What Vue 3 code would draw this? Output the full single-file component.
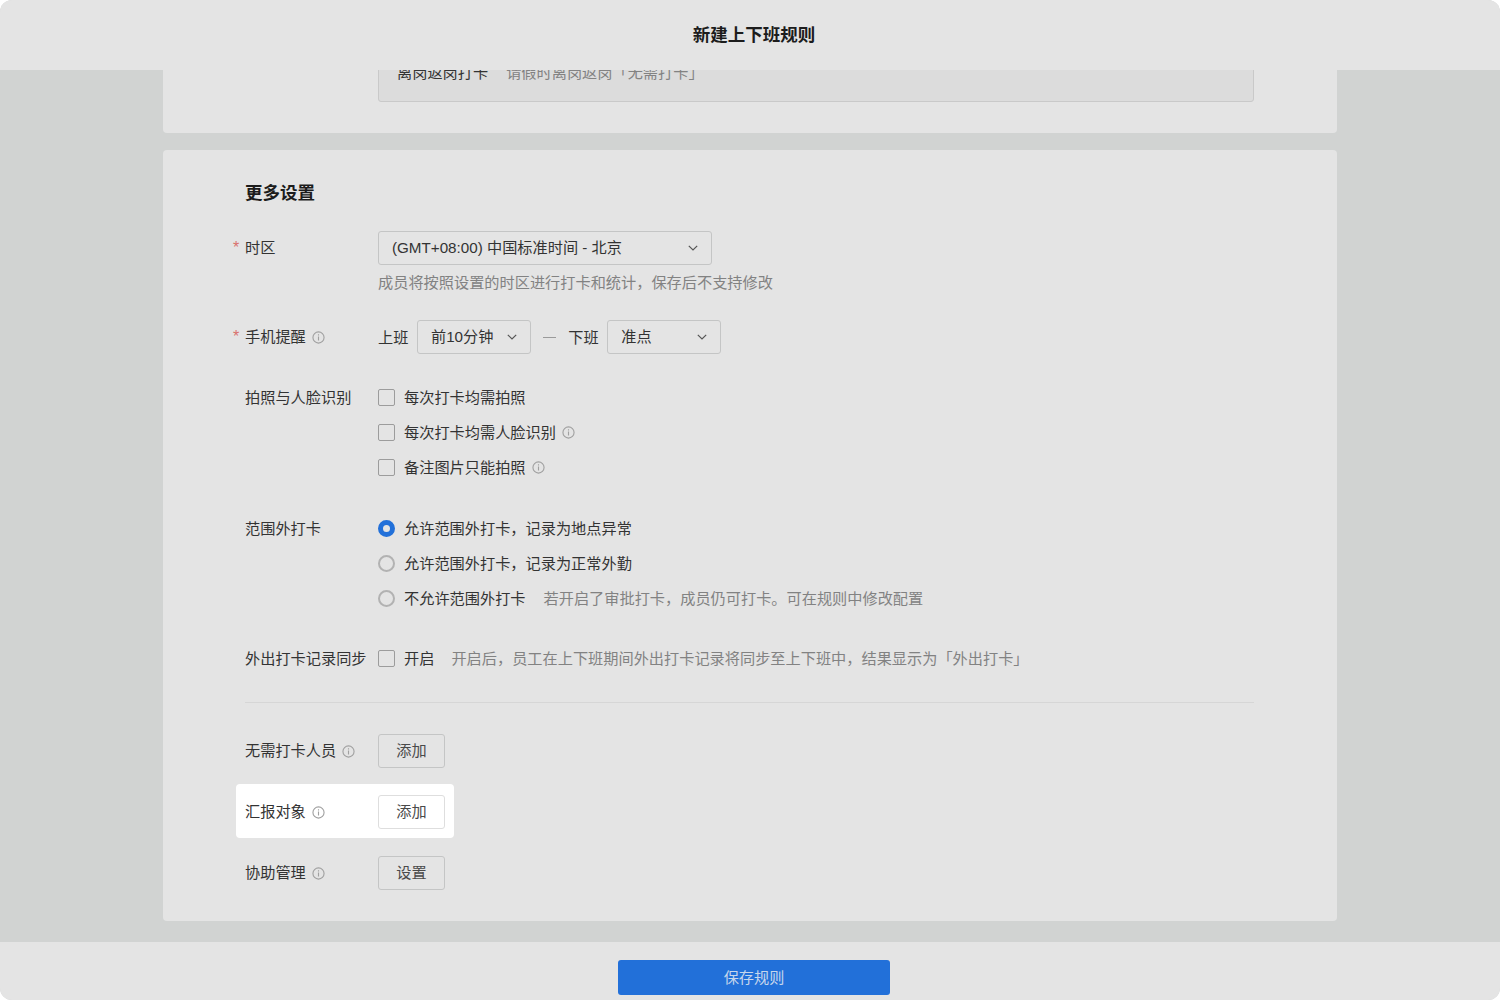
<script setup>
const photoOptions = [
  { text: '每次打卡均需拍照', info: false },
  { text: '每次打卡均需人脸识别', info: true },
  { text: '备注图片只能拍照', info: true }
];

const scopeOptions = [
  { text: '允许范围外打卡，记录为地点异常', checked: true },
  { text: '允许范围外打卡，记录为正常外勤', checked: false },
  { text: '不允许范围外打卡', checked: false, hint: '若开启了审批打卡，成员仍可打卡。可在规则中修改配置' }
];
</script>

<template>
  <div class="page">
    <header class="top-bar">新建上下班规则</header>

    <main class="content">
      <section class="card card-clipped">
        <div class="inner-box">
          <span class="box-label">离岗返岗打卡</span>
          <span class="hint">请假时离岗返岗「无需打卡」</span>
        </div>
      </section>

      <section class="card card-settings">
        <h2 class="section-title">更多设置</h2>

        <div class="row row-timezone">
          <label class="label required">时区</label>
          <div class="field">
            <div class="select select-wide">
              <span>(GMT+08:00) 中国标准时间 - 北京</span>
              <svg class="chevron" viewBox="0 0 10 6"><path d="M.8.8 5 5l4.2-4.2" /></svg>
            </div>
            <p class="line hint">成员将按照设置的时区进行打卡和统计，保存后不支持修改</p>
          </div>
        </div>

        <div class="row row-phone">
          <label class="label required">
            手机提醒
            <svg class="info" viewBox="0 0 14 14"><circle cx="7" cy="7" r="6" /><path d="M7 6v4.2M7 3.6v1.2" /></svg>
          </label>
          <div class="inline-field">
            <span class="inline-text">上班</span>
            <div class="select select-small">
              <span>前10分钟</span>
              <svg class="chevron" viewBox="0 0 10 6"><path d="M.8.8 5 5l4.2-4.2" /></svg>
            </div>
            <span class="dash"></span>
            <span class="inline-text">下班</span>
            <div class="select select-small">
              <span>准点</span>
              <svg class="chevron" viewBox="0 0 10 6"><path d="M.8.8 5 5l4.2-4.2" /></svg>
            </div>
          </div>
        </div>

        <div class="row row-photo">
          <label class="label line">拍照与人脸识别</label>
          <div class="field">
            <div v-for="opt in photoOptions" :key="opt.text" class="line option">
              <span class="checkbox"></span>
              <span>{{ opt.text }}</span>
              <svg v-if="opt.info" class="info" viewBox="0 0 14 14"><circle cx="7" cy="7" r="6" /><path d="M7 6v4.2M7 3.6v1.2" /></svg>
            </div>
          </div>
        </div>

        <div class="row row-scope">
          <label class="label line">范围外打卡</label>
          <div class="field">
            <div v-for="opt in scopeOptions" :key="opt.text" class="line option">
              <span class="radio" :class="{ checked: opt.checked }"></span>
              <span>{{ opt.text }}</span>
              <span v-if="opt.hint" class="hint side-hint">{{ opt.hint }}</span>
            </div>
          </div>
        </div>

        <div class="row row-outing">
          <label class="label line">外出打卡记录同步</label>
          <div class="field">
            <div class="line option">
              <span class="checkbox"></span>
              <span>开启</span>
              <span class="hint side-hint side-hint-tight">开启后，员工在上下班期间外出打卡记录将同步至上下班中，结果显示为「外出打卡」</span>
            </div>
          </div>
        </div>

        <hr class="divider" />

        <div class="row row-action">
          <label class="label">
            无需打卡人员
            <svg class="info" viewBox="0 0 14 14"><circle cx="7" cy="7" r="6" /><path d="M7 6v4.2M7 3.6v1.2" /></svg>
          </label>
          <button class="btn">添加</button>
        </div>

        <div class="row row-action row-highlight">
          <label class="label">
            汇报对象
            <svg class="info" viewBox="0 0 14 14"><circle cx="7" cy="7" r="6" /><path d="M7 6v4.2M7 3.6v1.2" /></svg>
          </label>
          <button class="btn btn-light">添加</button>
        </div>

        <div class="row row-action row-last">
          <label class="label">
            协助管理
            <svg class="info" viewBox="0 0 14 14"><circle cx="7" cy="7" r="6" /><path d="M7 6v4.2M7 3.6v1.2" /></svg>
          </label>
          <button class="btn">设置</button>
        </div>
      </section>
    </main>

    <footer class="bottom-bar">
      <button class="save-btn">保存规则</button>
    </footer>
  </div>
</template>

<style>
html,
body {
  margin: 0;
  background: #fff;
}
</style>

<style scoped>
.page {
  width: 1500px;
  height: 1000px;
  display: flex;
  flex-direction: column;
  overflow: hidden;
  border-radius: 12px;
  background: #d1d3d2;
  color: #333;
  font-family: "Liberation Sans", "Noto Sans CJK SC", sans-serif;
  font-size: 15.2px;
}

.top-bar {
  height: 70px;
  flex: none;
  padding: 0 0 3px 8px;
  box-sizing: border-box;
  display: flex;
  align-items: center;
  justify-content: center;
  background: #e4e4e4;
  color: #1c1c1c;
  font-size: 17.5px;
  font-weight: 700;
}

.content {
  flex: 1;
  display: flex;
  flex-direction: column;
  align-items: center;
  gap: 17px;
  overflow: hidden;
}

.card {
  width: 1174px;
  box-sizing: border-box;
  background: #e4e4e4;
  border-radius: 0 0 4px 4px;
}

.card-clipped {
  height: 63px;
  flex: none;
  display: flex;
  align-items: flex-end;
  padding: 0 83px 31px 215px;
}

.inner-box {
  flex: 1;
  height: 60px;
  box-sizing: border-box;
  padding: 20px 18px 0;
  display: flex;
  gap: 18px;
  line-height: 20px;
  background: #dcdcdc;
  border: 1px solid #c9c9c9;
  border-radius: 3px;
}

.card-settings {
  padding: 31px 83px 31px 82px;
  border-radius: 4px;
}

.section-title {
  margin: 0;
  height: 24px;
  line-height: 24px;
  color: #1c1c1c;
  font-size: 17.5px;
  font-weight: 700;
}

.row {
  display: flex;
}

.row-timezone {
  margin-top: 26px;
}

.row-phone {
  margin-top: 20px;
}

.row-photo,
.row-scope {
  margin-top: 26px;
}

.row-outing {
  margin-top: 25px;
}

.label {
  width: 133px;
  flex: none;
  height: 34px;
  box-sizing: border-box;
  padding-bottom: 4px;
  display: flex;
  align-items: center;
  gap: 6px;
  position: relative;
}

.label .info {
  margin-top: 5px;
}

.label.line {
  height: 35px;
  padding-bottom: 0;
}

.required::before {
  content: "*";
  position: absolute;
  left: -12px;
  top: 8px;
  color: #d9706c;
  font-size: 16px;
}

.line {
  height: 35px;
  line-height: 35px;
  margin: 0;
}

.field {
  flex: 1;
}

.hint {
  color: #828282;
}

.select {
  height: 34px;
  box-sizing: border-box;
  padding: 0 13px;
  display: flex;
  align-items: center;
  justify-content: space-between;
  border: 1px solid #c4c5c5;
  border-radius: 3px;
}

.select > span {
  padding-bottom: 4px;
}

.select-wide {
  width: 334px;
}

.select-small {
  width: 114px;
}

.chevron {
  width: 10px;
  height: 6px;
  fill: none;
  stroke: #555;
  stroke-width: 1.2;
}

.inline-field {
  display: flex;
  align-items: center;
  gap: 8.6px;
}

.inline-text {
  padding-bottom: 3px;
}

.dash {
  width: 13px;
  height: 1px;
  margin: 0 3.8px 0 3.4px;
  background: #9a9a9a;
}

.option {
  display: flex;
  align-items: center;
}

.checkbox,
.radio {
  width: 17px;
  height: 17px;
  flex: none;
  box-sizing: border-box;
  margin-right: 9px;
  border: 1px solid #9c9c9c;
  border-radius: 2px;
}

.radio {
  border: 2px solid #b2b2b2;
  border-radius: 50%;
}

.radio.checked {
  border: 5.5px solid #2270d9;
  background: #e4e4e4;
}

.side-hint {
  margin-left: 18px;
}

.side-hint-tight {
  margin-left: 17px;
}

.info {
  width: 13px;
  height: 13px;
  flex: none;
  fill: none;
  stroke: #a0a0a0;
  stroke-width: 1.2;
}

.option .info {
  margin-left: 6px;
}

.divider {
  height: 1px;
  margin: 26px 0 31px;
  border: 0;
  background: #d6d6d6;
}

.row-highlight {
  width: 218px;
  box-sizing: border-box;
  margin: 16px 0 18px -9px;
  padding: 11px 9px 9px;
  background: #fff;
  border-radius: 4px;
}

.btn {
  width: 67px;
  height: 34px;
  padding: 0 0 5px;
  border: 1px solid #c4c5c5;
  border-radius: 3px;
  background: transparent;
  color: #4a4a4a;
  font: inherit;
}

.btn-light {
  background: #fff;
  border-color: #dedede;
}

.bottom-bar {
  height: 58px;
  flex: none;
  box-sizing: border-box;
  padding: 18px 0 0 8px;
  display: flex;
  justify-content: center;
  background: #e4e4e4;
}

.save-btn {
  width: 272px;
  height: 35px;
  padding: 0 0 4px;
  border: 0;
  border-radius: 3px;
  background: #2270d9;
  color: #c6d6ec;
  font: inherit;
}
</style>
